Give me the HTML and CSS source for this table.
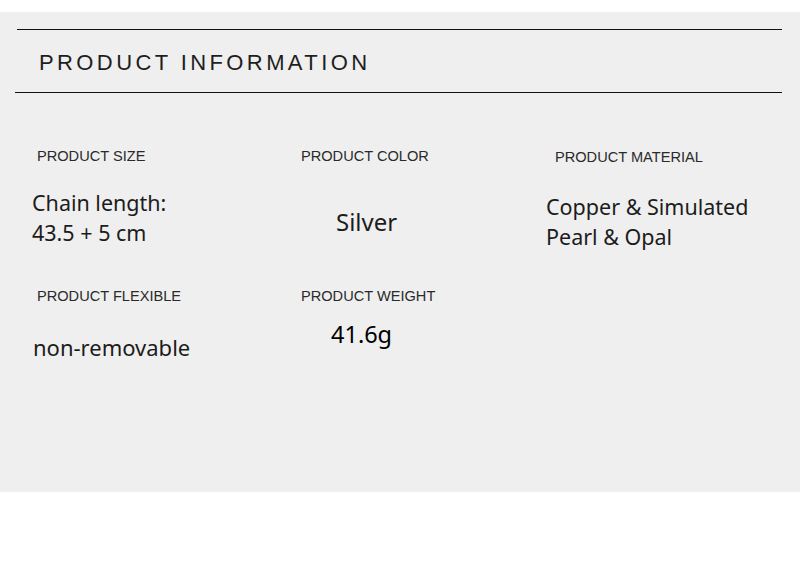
FILE: index.html
```html
<!DOCTYPE html>
<html lang="en">
<head>
<meta charset="utf-8">
<title>Product Information</title>
<link rel="stylesheet" href="styles.css">
</head>
<body>
<section class="panel">
  <hr class="rule rule-top">
  <h1 class="title">PRODUCT INFORMATION</h1>
  <hr class="rule rule-bottom">
  <div class="specs">
    <div class="spec">
      <div class="label label-c1">PRODUCT SIZE</div>
      <div class="value value-size">Chain length:<br>43.5 + 5 cm</div>
    </div>
    <div class="spec">
      <div class="label label-c2">PRODUCT COLOR</div>
      <div class="value value-color">Silver</div>
    </div>
    <div class="spec spec-c3">
      <div class="label label-c3">PRODUCT MATERIAL</div>
      <div class="value value-material">Copper &amp; Simulated<br>Pearl &amp; Opal</div>
    </div>
    <div class="spec">
      <div class="label label-c1">PRODUCT FLEXIBLE</div>
      <div class="value value-flex">non-removable</div>
    </div>
    <div class="spec">
      <div class="label label-c2">PRODUCT WEIGHT</div>
      <div class="value value-weight">41.6g</div>
    </div>
  </div>
</section>
</body>
</html>
```

FILE: styles.css
```css
html, body {
  margin: 0;
  padding: 0;
  background: #ffffff;
}

.panel {
  margin-top: 12px;
  height: 480px;
  box-sizing: border-box;
  padding-top: 17px;
  background: #efefef;
  overflow: hidden;
}

.rule {
  border: 0;
  border-top: 1px solid #111111;
  height: 0;
}

.rule-top {
  margin: 0 18px 0 17px;
}

.rule-bottom {
  margin: 0 18px 0 15px;
}

.title {
  margin: 22px 0 18px;
  padding-left: 39px;
  font-family: "Liberation Sans", Arial, sans-serif;
  font-weight: normal;
  font-size: 22px;
  line-height: 22px;
  letter-spacing: 3.4px;
  color: #1e1e1e;
}

.specs {
  margin-top: 54px;
  padding-left: 32px;
  display: grid;
  grid-template-columns: 268px 245px 1fr;
  grid-template-rows: 140px auto;
}

.label {
  font-family: "Liberation Sans", Arial, sans-serif;
  font-size: 14.6px;
  line-height: 18px;
  color: #2a2a2a;
}

.label-c1 { margin-left: 5px; }
.label-c2 { margin-left: 1px; }
.label-c3 { margin-left: 10px; }

.spec-c3 { padding-top: 1px; }

.value {
  font-family: "Noto Sans", "Open Sans", sans-serif;
  font-size: 21.5px;
  line-height: 30px;
  color: #1c1c1c;
}

.value-size {
  margin-top: 23px;
}

.value-color {
  margin-top: 42px;
  margin-left: 36px;
  font-size: 24px;
}

.value-material {
  margin-top: 26px;
  margin-left: 1px;
}

.value-flex {
  margin-top: 27px;
  margin-left: 1px;
  font-size: 22px;
}

.value-weight {
  margin-top: 14px;
  margin-left: 31px;
  font-size: 23.5px;
  color: #000000;
}
```
